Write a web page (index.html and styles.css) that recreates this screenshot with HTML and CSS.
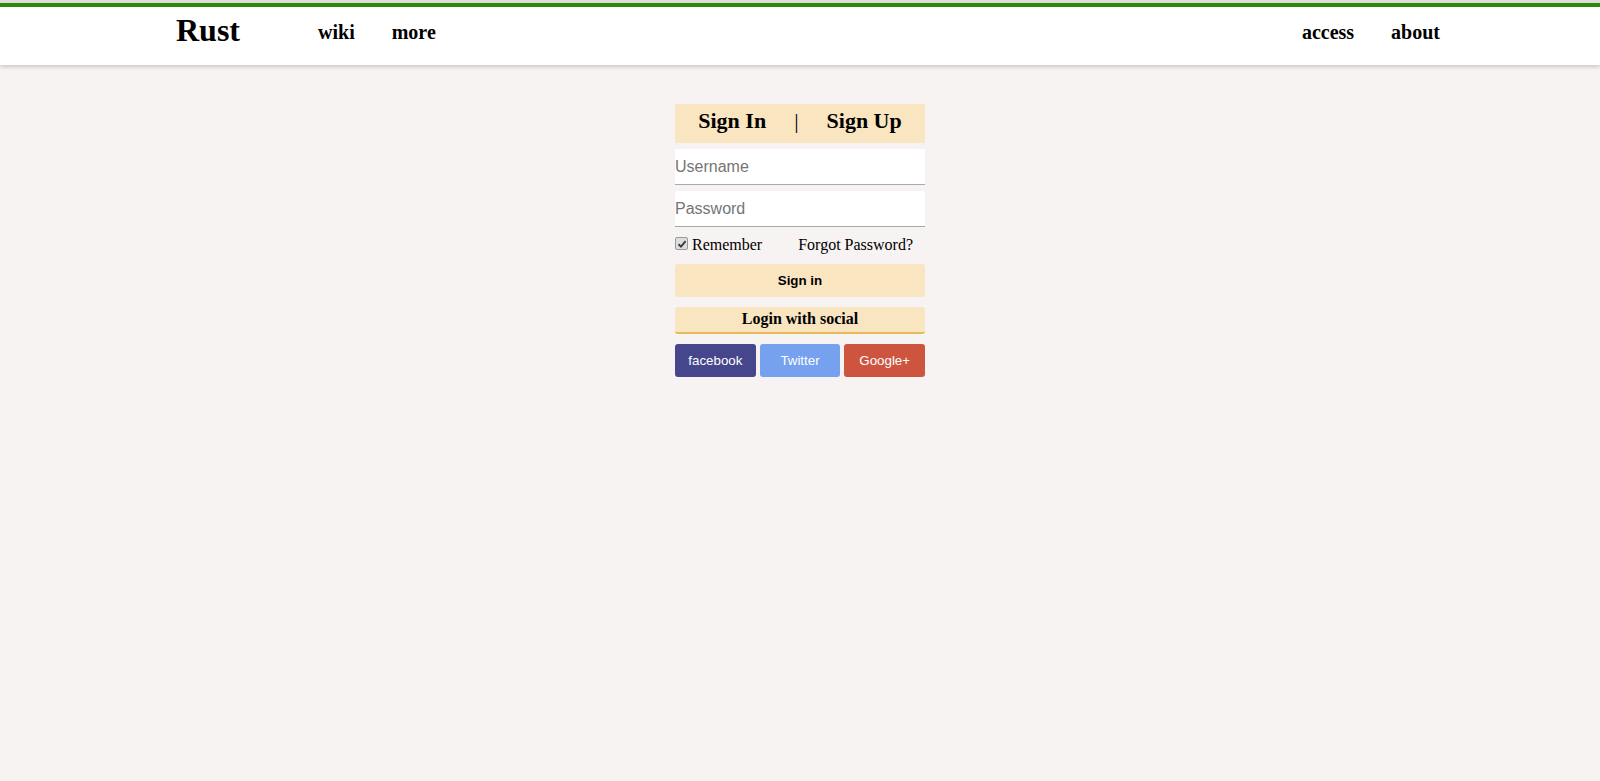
FILE: index.html
```html
<!DOCTYPE html>
<html>
<head>
<meta charset="utf-8">
<link rel="stylesheet" href="styles.css">
</head>
<body>
<header class="topbar">
  <nav class="nav">
    <a class="brand" href="#">Rust</a>
    <a class="link first" href="#">wiki</a>
    <a class="link" href="#">more</a>
    <span class="spacer"></span>
    <a class="link" href="#">access</a>
    <a class="link last" href="#">about</a>
  </nav>
</header>
<main class="page">
  <div class="box">
    <div class="tabs">
      <span class="tab">Sign In</span>
      <span class="sep">|</span>
      <span class="tab">Sign Up</span>
    </div>
    <input class="field" type="text" placeholder="Username">
    <input class="field pw" type="password" placeholder="Password">
    <div class="row">
      <label class="remember"><span class="check"><svg width="10" height="10" viewBox="0 0 10 10"><path d="M1.5 5.2 L4 7.6 L8.6 2.2" fill="none" stroke="#3a3a3a" stroke-width="1.9"/></svg></span>Remember</label>
      <a class="forgot" href="#">Forgot Password?</a>
    </div>
    <button class="signin">Sign in</button>
    <div class="social-title">Login with social</div>
    <div class="socials">
      <button class="soc fb">facebook</button>
      <button class="soc tw">Twitter</button>
      <button class="soc gp">Google+</button>
    </div>
  </div>
</main>
</body>
</html>
```

FILE: styles.css
```css
html, body { margin: 0; padding: 0; }
body {
  background: #f7f3f2;
  font-family: "Liberation Serif", "Times New Roman", serif;
  color: #000;
}
.topbar {
  border-top: 3px solid #dcdcdc;
  background: #fff;
  box-shadow: 0 2px 4px rgba(0,0,0,0.18);
}
.nav {
  border-top: 4px solid #2d8a08;
  height: 62px;
  box-sizing: border-box;
  display: flex;
  align-items: flex-start;
  padding: 0 160px 0 176px;
}
.nav a { color: #000; text-decoration: none; font-weight: bold; line-height: 1; }
.brand { font-size: 32px; margin-top: 7px; }
.link { font-size: 20px; margin-left: 37px; margin-top: 15px; }
.link.first { margin-left: 78px; }
.spacer { flex: 1; }
.page { display: flex; justify-content: center; padding-top: 39px; }
.box { width: 250px; display: flex; flex-direction: column; }
.tabs {
  background: #f9e5c0;
  height: 39px;
  box-sizing: border-box;
  padding-bottom: 6px;
  display: flex;
  justify-content: center;
  align-items: center;
  gap: 28px;
  font-size: 22px;
  font-weight: bold;
}
.sep { font-weight: normal; }
.field {
  margin-top: 6px;
  height: 36px;
  box-sizing: border-box;
  border: none;
  border-bottom: 1px solid #a9a9a9;
  background: #fff;
  padding: 0;
  font-family: "Liberation Sans", Arial, sans-serif;
  font-size: 16px;
  outline: none;
}
.field.pw { margin-top: 6px; }
.field::placeholder { color: #757575; }
.row {
  display: flex;
  align-items: center;
  margin-top: 6px;
  height: 24px;
  font-size: 16px;
}
.remember { display: flex; align-items: center; }
.check {
  width: 11px;
  height: 11px;
  border: 1px solid #9a9a9a;
  border-radius: 2px;
  background: #dedede;
  margin-right: 4px;
  margin-top: -3px;
  display: flex;
  align-items: center;
  justify-content: center;
}
.forgot { color: #000; text-decoration: none; margin-left: 36px; }
.signin {
  margin-top: 7px;
  height: 33px;
  border: none;
  border-radius: 3px;
  background: #f9e5c0;
  font-family: "Liberation Sans", Arial, sans-serif;
  font-size: 13.33px;
  font-weight: bold;
  color: #000;
}
.social-title {
  margin-top: 10px;
  height: 27px;
  box-sizing: border-box;
  background: #f9e5c0;
  border-bottom: 2px solid #e9b95c;
  border-radius: 3px;
  text-align: center;
  font-size: 16px;
  font-weight: bold;
  line-height: 24px;
}
.socials { display: flex; gap: 4px; margin-top: 10px; }
.soc {
  flex: 1;
  height: 33px;
  border: none;
  border-radius: 3px;
  color: #fff;
  font-family: "Liberation Sans", Arial, sans-serif;
  font-size: 13.33px;
}
.fb { background: #45468b; }
.tw { background: #75a1ee; }
.gp { background: #cd5540; }
```
